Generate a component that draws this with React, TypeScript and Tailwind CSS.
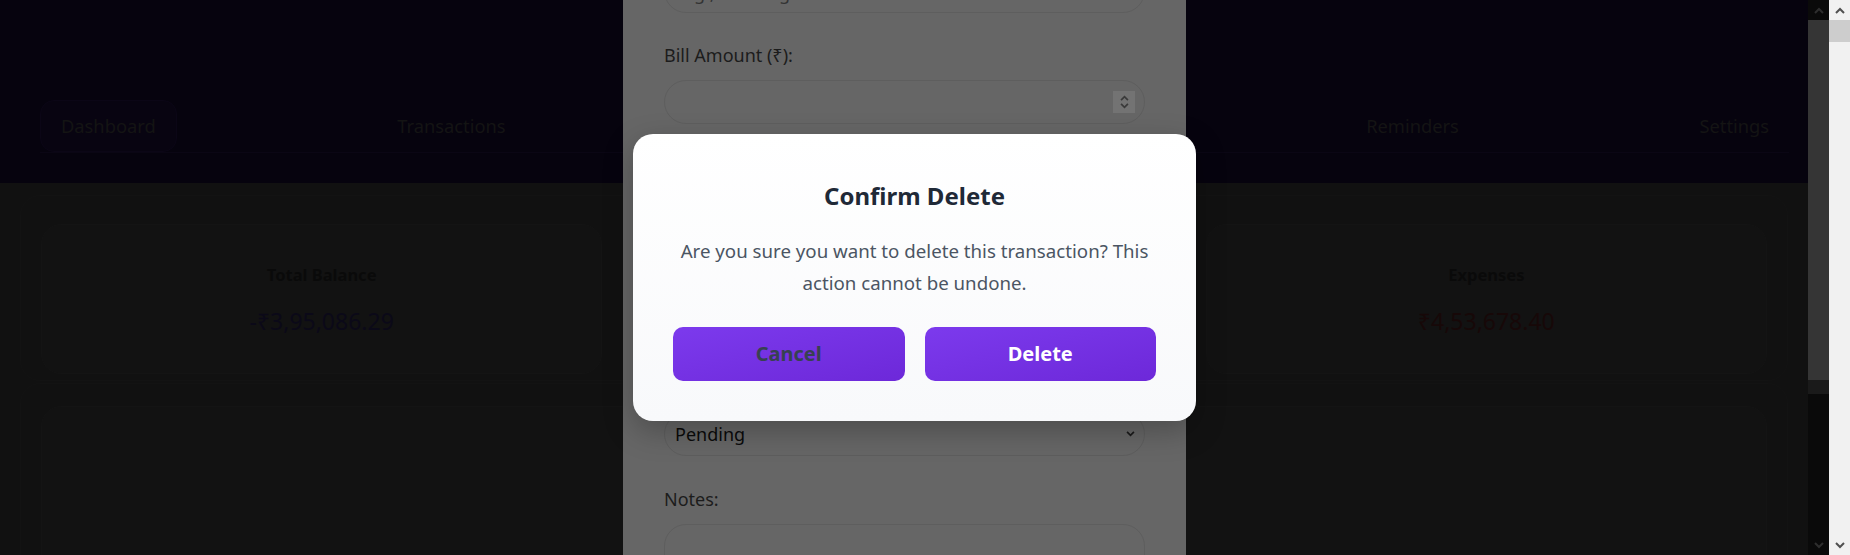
import React from "react";

const navItems = ["Dashboard", "Transactions", "Budget", "Analytics", "Reminders", "Settings"];

function Chevron({ dir, className }: { dir: "up" | "down"; className?: string }) {
  return (
    <svg width="10" height="7" viewBox="0 0 10 7" className={className}>
      {dir === "up" ? (
        <path d="M1 6 L5 2 L9 6" fill="none" stroke="currentColor" strokeWidth="2" />
      ) : (
        <path d="M1 1 L5 5 L9 1" fill="none" stroke="currentColor" strokeWidth="2" />
      )}
    </svg>
  );
}

function StatCard({ title, value, valueClass }: { title: string; value: string; valueClass: string }) {
  return (
    <div className="flex h-[150px] flex-1 flex-col items-center justify-center rounded-[20px] border border-[#141414] bg-[#121212]">
      <div className="text-[16.5px] font-bold leading-[24px] text-[#0a0a0a]">{title}</div>
      <div className={`mt-[19px] text-[23px] leading-[30px] ${valueClass}`}>{value}</div>
    </div>
  );
}

export default function App() {
  return (
    <div className="flex h-[555px] w-[1850px] overflow-hidden font-['Noto_Sans',sans-serif]">
      {/* viewport area (excluding outer scrollbar) */}
      <div className="relative flex w-[1829px] shrink-0">
        {/* page */}
        <div className="relative w-[1808px] shrink-0 bg-[#111111]">
          <header className="h-[183px] bg-[#06030e] pt-[100px]">
            <nav className="ml-[40px] mr-[19px] flex h-[53px] items-start justify-between border-b border-[#0a0614]">
              {navItems.map((item, i) => (
                <div
                  key={item}
                  className={`flex h-[52px] items-center rounded-[14px] px-[20px] text-[18.3px] text-[#141414] ${
                    i === 0 ? "border border-[#0b0616] bg-[#080411]" : ""
                  }`}
                >
                  {item}
                </div>
              ))}
            </nav>
          </header>

          <main className="px-[20px] pt-[12px]">
            <section className="rounded-[20px] border border-[#131313] px-[20px] pt-[28px] pb-[6px]">
              <div className="flex gap-[21px]">
                <StatCard title="Total Balance" value="-₹3,95,086.29" valueClass="text-[#0b0918]" />
                <StatCard title="Income" value="₹58,592.11" valueClass="text-[#0a140b]" />
                <StatCard title="Expenses" value="₹4,53,678.40" valueClass="text-[#170808]" />
              </div>
            </section>
            <section className="mt-[2px] h-[300px] rounded-[20px] border border-[#131313] px-[20px] pt-[22px]">
              <div className="h-[280px] rounded-[20px] border border-[#141414] bg-[#121212]" />
            </section>
          </main>

          {/* form modal panel (scrolled) */}
          <div className="absolute top-0 left-[623px] h-[555px] w-[563px] overflow-hidden bg-[#666666] px-[41px]">
            <div className="mt-[-31px]">
              <div className="flex h-[44px] items-center rounded-[22px] border border-[#5e5e5e] px-[14px] pt-[4px] text-[18px] text-[#333333]">
                e.g., Housing
              </div>
              <div className="mt-[30px] text-[18px] leading-[24px] text-[#1c1c1c]">Bill Amount (₹):</div>
              <div className="mt-[13px] flex h-[44px] items-center justify-end rounded-[22px] border border-[#5e5e5e] pr-[9px]">
                <div className="flex h-[22px] w-[22px] flex-col items-center justify-center bg-[#737373] text-[#3a3a3a]">
                  <Chevron dir="up" className="h-[6px] w-[9px]" />
                  <Chevron dir="down" className="mt-[2px] h-[6px] w-[9px]" />
                </div>
              </div>
              <div className="mt-[31px] text-[18px] leading-[24px] text-[#1c1c1c]">Due Date:</div>
              <div className="mt-[13px] h-[44px] rounded-[22px] border border-[#5e5e5e]" />
              <div className="mt-[31px] text-[18px] leading-[24px] text-[#1c1c1c]">Category:</div>
              <div className="mt-[13px] h-[44px] rounded-[22px] border border-[#5e5e5e]" />
              <div className="mt-[27px] text-[18px] leading-[24px] text-[#1c1c1c]">Status:</div>
              <div className="mt-[13px] flex h-[44px] items-center justify-between rounded-[22px] border border-[#5e5e5e] pl-[10px] pr-[9px] text-[18px] text-[#0a0a0a]">
                <span>Pending</span>
                <Chevron dir="down" className="h-[6px] w-[9px] text-[#1a1a1a]" />
              </div>
              <div className="mt-[31px] text-[18px] leading-[24px] text-[#1c1c1c]">Notes:</div>
              <div className="mt-[13px] h-[80px] rounded-[22px] border border-[#5e5e5e]" />
            </div>
          </div>
        </div>

        {/* inner scrollbar (dimmed) */}
        <div className="flex w-[21px] shrink-0 flex-col bg-[#0a0a0a]">
          <div className="flex h-[20px] items-center justify-center text-[#2e2e2e]">
            <Chevron dir="up" />
          </div>
          <div className="h-[360px] bg-[#353535]" />
          <div className="h-[14px] bg-[#1a1a1a]" />
          <div className="flex-1" />
          <div className="flex h-[20px] items-center justify-center text-[#2e2e2e]">
            <Chevron dir="down" />
          </div>
        </div>

        {/* confirm dialog overlay */}
        <div className="absolute inset-0 flex items-center justify-center">
          <div className="w-[563px] rounded-[20px] bg-gradient-to-b from-white to-[#f8f9fb] px-[40px] pt-[47px] pb-[40px] text-center shadow-[0_10px_30px_rgba(0,0,0,0.25)]">
            <h2 className="text-[24px] font-bold leading-[30px] text-[#1f2937]">Confirm Delete</h2>
            <p className="mt-[24px] text-[18.7px] leading-[32px] text-[#4b5563]">
              Are you sure you want to delete this transaction? This action cannot be undone.
            </p>
            <div className="mt-[28px] flex gap-[20px]">
              <button className="h-[54px] flex-1 rounded-[10px] bg-gradient-to-br from-[#7c3aed] to-[#6d28d9] text-[20px] font-bold text-[#374151]">
                Cancel
              </button>
              <button className="h-[54px] flex-1 rounded-[10px] bg-gradient-to-br from-[#7c3aed] to-[#6d28d9] text-[20px] font-bold text-white">
                Delete
              </button>
            </div>
          </div>
        </div>
      </div>

      {/* outer scrollbar */}
      <div className="flex w-[21px] shrink-0 flex-col bg-[#f1f1f1]">
        <div className="flex h-[20px] items-center justify-center text-[#505050]">
          <Chevron dir="up" />
        </div>
        <div className="h-[22px] bg-[#cdcdcd]" />
        <div className="flex-1" />
        <div className="flex h-[20px] items-center justify-center text-[#505050]">
          <Chevron dir="down" />
        </div>
      </div>
    </div>
  );
}
